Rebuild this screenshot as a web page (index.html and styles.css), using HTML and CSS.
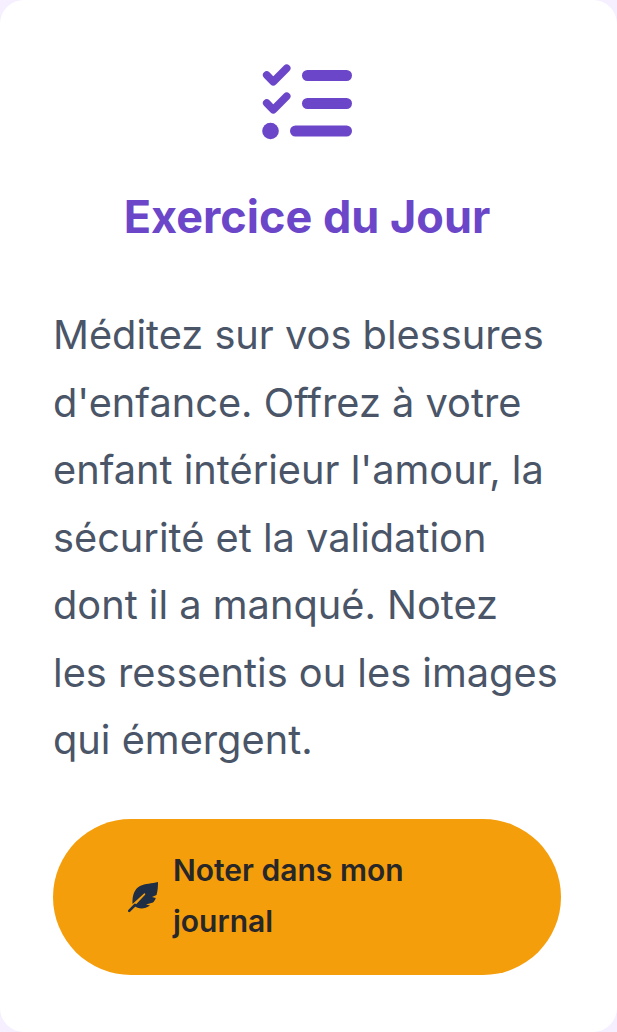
FILE: index.html
```html
<!DOCTYPE html>
<html lang="fr">
<head>
<meta charset="utf-8">
<title>Exercice du Jour</title>
<link rel="stylesheet" href="styles.css">
</head>
<body>
<main class="card">
  <svg class="list-icon" viewBox="0 0 92 76" aria-hidden="true">
    <g fill="none" stroke="#6b46c9" stroke-linecap="round" stroke-linejoin="round">
      <path d="M4.7 11 L11.3 17.8 L24.7 4.3" stroke-width="7.6"/>
      <path d="M4.7 39 L11.3 45.8 L24.7 32.3" stroke-width="7.6"/>
      <path d="M45.5 11.5 H84.5" stroke-width="11"/>
      <path d="M45.5 39.5 H84.5" stroke-width="11"/>
      <path d="M33.5 67 H84.5" stroke-width="11"/>
    </g>
    <circle cx="8.5" cy="67" r="8.3" fill="#6b46c9"/>
  </svg>
  <h1 class="title">Exercice du Jour</h1>
  <p class="body-text">Méditez sur vos blessures d'enfance. Offrez à votre enfant intérieur l'amour, la sécurité et la validation dont il a manqué. Notez les ressentis ou les images qui émergent.</p>
  <a class="cta" href="#">
    <svg class="feather" viewBox="0 0 32 32" aria-hidden="true">
      <path fill="#1f2d45" d="M31 1 C25 2.5 18 2.5 13 5 C7.5 8 5 14 5.5 23 L17 12.5 C17.8 11.9 18.8 12.9 18.1 13.7 L7.5 25 C11 28 17.5 28.5 23 24.5 L19 23.5 L26 21.5 C27.5 20 28.2 18.5 28.8 17 L25 16 L29.5 14 C30.8 10 31 5 31 1 Z"/>
      <path fill="none" stroke="#1f2d45" stroke-width="2.6" stroke-linecap="round" d="M2.2 29.8 L8 24"/>
    </svg>
    <span class="cta-label">Noter dans mon journal</span>
  </a>
</main>
</body>
</html>
```
FILE: styles.css
```css
* { box-sizing: border-box; }
html, body { margin: 0; height: 100%; }
body {
  background: #f5efff;
  font-family: Inter, "Liberation Sans", sans-serif;
}
.card {
  height: 1032px;
  background: #ffffff;
  border-radius: 24px;
  padding: 64px 56px 0 53px;
  display: flex;
  flex-direction: column;
  align-items: center;
  overflow: hidden;
}
.list-icon {
  width: 92px;
  height: 76px;
  flex: none;
  margin-left: 2px;
}
.title {
  margin: 49px 0 0;
  font-size: 45px;
  line-height: 56px;
  font-weight: 700;
  color: #6b46c9;
  text-align: center;
}
.body-text {
  margin: 56px 0 0;
  width: 100%;
  font-size: 39.75px;
  line-height: 67.5px;
  color: #4a5568;
}
.cta {
  margin-top: 45px;
  width: 100%;
  height: 156px;
  flex: none;
  padding: 0 74px;
  display: flex;
  align-items: center;
  gap: 14px;
  background: #f59e0b;
  border-radius: 78px;
  color: #27272a;
  text-decoration: none;
}
.feather {
  width: 32px;
  height: 32px;
  flex: none;
}
.cta-label {
  font-size: 30px;
  line-height: 51px;
  font-weight: 600;
  padding-bottom: 2px;
}
```
